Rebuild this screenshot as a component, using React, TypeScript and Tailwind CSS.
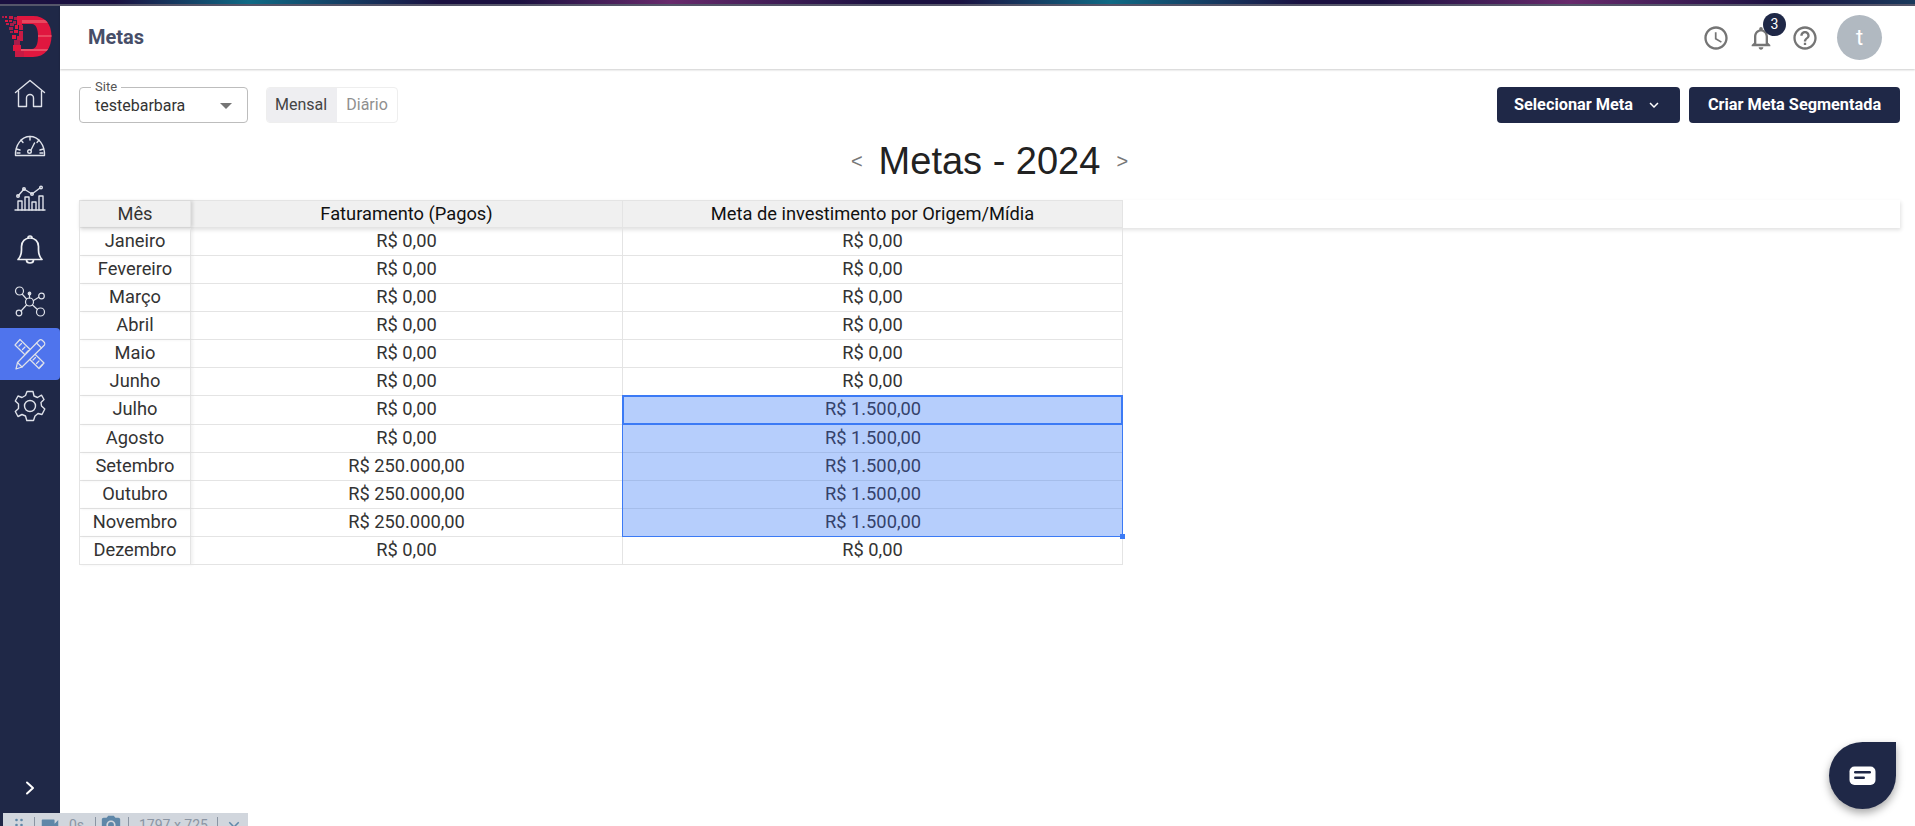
import React from "react";
import { MdAccessTime, MdNotificationsNone, MdHelpOutline, MdKeyboardArrowDown, MdVideocam, MdPhotoCamera, MdClose } from "react-icons/md";

const stroke = { fill: "none", stroke: "#dfe2ea", strokeWidth: 1.4, strokeLinecap: "round", strokeLinejoin: "round" } as const;

function Logo() {
  const px = [[2,1,2,2],[5,1,2,2],[9,1,4,3],[14,2,3,3],[5,5,3,2],[9,5,3,2],[13,6,3,3],[17,5,5,5],[6,8,3,2],[10,8,4,3],[15,10,3,4],[19,10,4,5],[9,12,4,3],[14,15,4,3],[19,16,4,5],[10,16,3,2],[12,20,4,4],[17,21,6,5],[14,25,6,5],[13,30,8,6],[15,36,9,6]];
  return (
    <svg width="52" height="44" viewBox="0 0 52 44" className="block">
      <defs>
        <clipPath id="d">
          <path d="M17 1H33C45 1 51.500 9 51.500 21C51.500 33 45 42 33 42H15V34H27V9H17ZM27 9V34H32C36 34 38 29 38 21C38 14 36 9 32 9Z" />
        </clipPath>
      </defs>
      <g clipPath="url(#d)">
        <rect x="0" y="0" width="52" height="44" fill="#e0173f" />
        <rect x="0" y="5" width="52" height="3" fill="#e8475f" />
        <rect x="0" y="20" width="52" height="2" fill="#e8475f" />
        <rect x="0" y="34" width="52" height="2" fill="#ea5068" />
      </g>
      {px.map(([x, y, w, h], i) => (
        <rect key={i} x={x} y={y} width={w} height={h} fill={i % 3 === 0 ? "#a81c4a" : i % 3 === 1 ? "#e0173f" : "#c91a44"} />
      ))}
    </svg>
  );
}

function HomeIcon() {
  return (
    <svg width="32" height="30" viewBox="0 0 32 30" {...stroke}>
      <path d="M1.500 13.500L16 1.500L30.500 13.500" />
      <path d="M4.500 12V27.500H12.500V19a3.500 3.500 0 0 1 7 0V27.500H27.500V12" />
    </svg>
  );
}
function GaugeIcon() {
  return (
    <svg width="32" height="22" viewBox="0 0 32 22" {...stroke}>
      <path d="M2 20.500H30.500C31 10 24.500 1.500 16 1.500C7.500 1.500 1 10 1.500 20.500Z" />
      <path d="M16 1.500V5M7 5l2 2.500M25 5l-2 2.500M2.500 14l3.500 1M29.500 14l-3.500 1M3 18H6M26 18H29" />
      <circle cx="15.500" cy="16.500" r="1.800" />
      <path d="M17 15L20.500 8" />
    </svg>
  );
}
function ChartIcon() {
  return (
    <svg width="32" height="26" viewBox="0 0 32 26" {...stroke}>
      <path d="M1 25H31" />
      <path d="M4 25V16H8V25M11 25V12H15V25M18 25V17H22V25M25 25V11H29V25" />
      <path d="M4 11L10 4L18 9L26 3" />
      <circle cx="4" cy="11" r="1.300" />
      <circle cx="10" cy="4" r="1.300" />
      <circle cx="18" cy="9" r="1.300" />
      <circle cx="27" cy="2.500" r="1.300" />
    </svg>
  );
}
function BellIcon() {
  return (
    <svg width="26" height="30" viewBox="0 0 26 30" fill="none" stroke="#eef0f4" strokeWidth="1.700" strokeLinejoin="round" strokeLinecap="round">
      <path d="M1 24.500C3.500 22 4.500 20 4.500 15V11.500C4.500 6.500 8 3 13 3C18 3 21.500 6.500 21.500 11.500V15C21.500 20 22.500 22 25 24.500Z" />
      <path d="M11 3A2 2 0 0 1 15 3" />
      <path d="M9.500 25C9.500 29 16.500 29 16.500 25" />
    </svg>
  );
}
function NetworkIcon() {
  return (
    <svg width="32" height="32" viewBox="0 0 32 32" {...stroke} strokeWidth="1.200">
      <circle cx="15.500" cy="16" r="4" />
      <circle cx="5.500" cy="5" r="4" />
      <circle cx="27.500" cy="10" r="2.800" />
      <circle cx="5" cy="27" r="2.800" />
      <circle cx="26.500" cy="26" r="4" />
      <circle cx="15.500" cy="7.500" r="1.300" fill="#dfe2ea" />
      <path d="M8.500 8.500L12.500 13M19.500 14.500L24.800 11.300M12.500 19L7 25M18.500 19L23.500 23.500M15.500 9V12" />
    </svg>
  );
}
function ToolsIcon() {
  return (
    <svg width="32" height="32" viewBox="0 0 32 32" {...stroke} strokeWidth="1.200">
      <path d="M1 7L6 1.500L30 25L25 30.500Z" />
      <path d="M5 8L7.500 5.500M8.500 11.500L11 9M12 15L14.500 12.500M19 22L21.500 19.500M22.500 25.500L25 23M26 29L28.500 26.500" />
      <path d="M25 2.500C26 1.500 27.500 1.500 28.500 2.500L30 4C31 5 31 6.500 30 7.500L8 29L2 31L3.500 24.500Z" fill="#4f74ed" />
      <path d="M22.500 5L27.500 10M3.500 24.500L8 29" />
    </svg>
  );
}
function GearIcon() {
  return (
    <svg width="32" height="32" viewBox="0 0 32 32" {...stroke}>
      <circle cx="16" cy="16" r="5.500" />
      <path d="M13 1.500H19L20 6L23.500 7.500L27.500 5.200L30 9.500L27 12.500L27.500 16L30.800 19L28 24.500L24 23.500L21 26L19.500 30.500H12.800L11.500 26L8 24.500L4 26.500L1.300 21.500L4.500 18.500V14L1.300 11L4 6L8 7.500L11.500 5.500Z" />
    </svg>
  );
}

const nav = [
  { icon: <HomeIcon /> },
  { icon: <GaugeIcon /> },
  { icon: <ChartIcon /> },
  { icon: <BellIcon /> },
  { icon: <NetworkIcon /> },
  { icon: <ToolsIcon />, active: true },
  { icon: <GearIcon /> },
];

const rows: [string, string, string][] = [
  ["Janeiro", "R$ 0,00", "R$ 0,00"],
  ["Fevereiro", "R$ 0,00", "R$ 0,00"],
  ["Março", "R$ 0,00", "R$ 0,00"],
  ["Abril", "R$ 0,00", "R$ 0,00"],
  ["Maio", "R$ 0,00", "R$ 0,00"],
  ["Junho", "R$ 0,00", "R$ 0,00"],
  ["Julho", "R$ 0,00", "R$ 1.500,00"],
  ["Agosto", "R$ 0,00", "R$ 1.500,00"],
  ["Setembro", "R$ 250.000,00", "R$ 1.500,00"],
  ["Outubro", "R$ 250.000,00", "R$ 1.500,00"],
  ["Novembro", "R$ 250.000,00", "R$ 1.500,00"],
  ["Dezembro", "R$ 0,00", "R$ 0,00"],
];

export default function App() {
  return (
    <div className="relative flex h-screen w-full flex-col overflow-hidden bg-white font-['Roboto',sans-serif] text-[#222]">
      <div className="h-[4px] shrink-0 bg-[linear-gradient(90deg,#1a1040_0%,#1a1040_6%,#0f6a85_13%,#1a1040_23%,#1a1040_27%,#682a6c_35%,#1a1040_46%,#1a1040_50%,#0f6a85_58%,#1a1040_68%,#1a1040_72%,#682a6c_82%,#1a1040_93%,#1a3a5c_100%)]" />
      <div className="h-[2px] shrink-0 bg-[#55566a]" />
      <div className="flex min-h-0 flex-1">
        <aside className="flex w-[60px] shrink-0 flex-col bg-[#1f2847]">
          <div className="flex h-[62px] shrink-0 items-start pt-[9px]">
            <Logo />
          </div>
          <nav className="flex flex-col">
            {nav.map((n, i) => (
              <div
                key={i}
                className={`flex h-[52px] items-center justify-center ${n.active ? "rounded-r bg-[#4f74ed]" : ""}`}
              >
                {n.icon}
              </div>
            ))}
          </nav>
          <div className="mt-auto flex h-[54px] items-start justify-center pt-[9px]">
            <svg width="12" height="14" viewBox="0 0 12 14" fill="none" stroke="#fff" strokeWidth="2" strokeLinecap="round" strokeLinejoin="round">
              <path d="M3 1.500L9 7L3 12.500" />
            </svg>
          </div>
        </aside>

        <main className="flex min-w-0 flex-1 flex-col">
          <header className="flex h-[63px] shrink-0 items-center justify-between pl-[28px] pr-[33px] shadow-[0_1px_2px_rgba(0,0,0,0.2)]">
            <h1 className="pb-[2px] text-[20px] font-bold text-[#474e68]">Metas</h1>
            <div className="flex items-center text-[#757575]">
              <MdAccessTime size={28} />
              <div className="relative ml-[17px]">
                <MdNotificationsNone size={28} />
                <span className="absolute left-[16px] top-[-11px] flex h-[23px] w-[23px] items-center justify-center rounded-full bg-[#1f2847] text-[14px] text-white">
                  3
                </span>
              </div>
              <MdHelpOutline size={28} className="ml-[16px]" />
              <div className="ml-[18px] flex h-[45px] w-[45px] items-center justify-center rounded-full bg-[#b1b9c1] text-[22px] text-white">
                t
              </div>
            </div>
          </header>

          <div className="flex flex-1 flex-col pl-[19px] pr-[15px] pt-[18px]">
            <div className="flex items-start justify-between">
              <div className="flex items-start gap-[18px]">
                <div className="relative flex h-[36px] w-[169px] items-center justify-between rounded border border-[#bdbdbd] pl-[15px] pr-[15px] text-[16px] text-[#333]">
                  <span className="absolute left-[11px] top-[-9px] bg-white px-[4px] text-[13px] leading-[15px] text-[#555]">Site</span>
                  <span className="pt-[1px]">testebarbara</span>
                  <span className="mt-[2px] h-0 w-0 border-x-[6px] border-t-[6px] border-x-transparent border-t-[#757575]" />
                </div>
                <div className="flex h-[36px] overflow-hidden rounded border border-[#eeeeee] text-[16px]">
                  <div className="flex w-[70px] items-center justify-center bg-[#eeeef1] pr-[2px] text-[#444]">Mensal</div>
                  <div className="flex w-[60px] items-center justify-center text-[#8f8f8f]">Diário</div>
                </div>
              </div>
              <div className="flex gap-[9px] text-[16.300px] font-bold text-white">
                <button className="flex h-[36px] w-[183px] items-center justify-center gap-[12px] rounded bg-[#1f2847]">
                  Selecionar Meta
                  <MdKeyboardArrowDown size={18} />
                </button>
                <button className="flex h-[36px] w-[211px] items-center justify-center rounded bg-[#1f2847]">
                  Criar Meta Segmentada
                </button>
              </div>
            </div>

            <div className="flex h-[77px] items-center justify-center gap-[16px] pb-[1px]">
              <span className="font-['Liberation_Sans',sans-serif] text-[20px] leading-none text-[#777]">&lt;</span>
              <span className="font-['Liberation_Sans',sans-serif] text-[38px] leading-none text-[#222]">Metas - 2024</span>
              <span className="font-['Liberation_Sans',sans-serif] text-[20px] leading-none text-[#777]">&gt;</span>
            </div>

            <div className="relative text-[18.300px]">
              <div className="flex h-[28px] shadow-[1px_2px_4px_rgba(0,0,0,0.12)]">
                <div className="grid w-[1044px] grid-cols-[112px_432px_500px] border-y border-[#e4e4e4] bg-[#f0f0f0] text-[#111]">
                  <div className="border-l border-r border-[#e4e4e4] text-center leading-[26px] text-[#333] shadow-[2px_0_3px_rgba(0,0,0,0.12)]">Mês</div>
                  <div className="border-r border-[#e4e4e4] text-center leading-[26px]">Faturamento (Pagos)</div>
                  <div className="border-r border-[#e4e4e4] text-center leading-[26px]">Meta de investimento por Origem/Mídia</div>
                </div>
                <div className="flex-1 bg-white" />
              </div>
              <div className="w-[1044px]">
                {rows.map(([m, a, b], i) => {
                  const sel = i >= 6 && i <= 10;
                  return (
                    <div key={m} className={`grid grid-cols-[112px_432px_500px] leading-[26px] ${i === 6 ? "h-[29px]" : "h-[28px]"}`}>
                      <div className="border-b border-l border-r border-[#e4e4e4] text-center text-[#333] shadow-[2px_0_3px_rgba(0,0,0,0.06)]">{m}</div>
                      <div className="border-b border-r border-[#e4e4e4] text-center text-[#333]">{a}</div>
                      <div className={sel ? "border-b border-[#a5bdea] bg-[#b6cefc] text-center text-[#34426b]" : "border-b border-r border-[#e4e4e4] text-center text-[#333]"}>{b}</div>
                    </div>
                  );
                })}
              </div>
              {/* selection overlay */}
              <div className="pointer-events-none absolute left-[543px] top-[195px] h-[142px] w-[501px] border border-[#3b7af5]">
                <div className="absolute inset-x-[-1px] top-[-1px] h-[30px] border-2 border-[#3b7af5]" />
                <div className="absolute bottom-[-3px] right-[-3px] h-[5px] w-[5px] bg-[#3b7af5]" />
              </div>
            </div>
          </div>
        </main>
      </div>

      {/* chat launcher */}
      <div className="absolute left-[1829px] top-[742px] flex h-[67px] w-[67px] items-center justify-center rounded-full rounded-tr-[8px] bg-[#1f2847] shadow-[0_4px_8px_rgba(0,0,0,0.35)]">
        <svg width="27" height="20" viewBox="0 0 27 20">
          <rect x="0.500" y="0.500" width="26" height="18.500" rx="5" fill="#fff" />
          <rect x="5" y="5" width="17" height="2.500" rx="1.200" fill="#1f2847" />
          <rect x="5" y="10.500" width="11" height="2.500" rx="1.200" fill="#1f2847" />
        </svg>
      </div>

      {/* capture toolbar */}
      <div className="absolute left-[3px] top-[813px] flex h-[30px] w-[245px] items-start bg-[#d1d6dd] pt-[1px] text-[14px] leading-[22px] text-[#8b95a3]">
        <span className="flex w-[31px] justify-center pt-[4px]">
          <svg width="8" height="14" viewBox="0 0 8 14" fill="#5f87a8">
            <circle cx="1.500" cy="2" r="1.300" /><circle cx="6.500" cy="2" r="1.300" /><circle cx="1.500" cy="7" r="1.300" /><circle cx="6.500" cy="7" r="1.300" />
          </svg>
        </span>
        <span className="mt-[3px] h-[20px] w-px bg-[#8b95a3]" />
        <span className="flex w-[60px] items-center gap-[8px] pl-[4px]">
          <MdVideocam size={22} className="text-[#5f87a8]" />0s
        </span>
        <span className="mt-[3px] h-[20px] w-px bg-[#8b95a3]" />
        <span className="w-[32px] pl-[4px]"><MdPhotoCamera size={22} className="text-[#5f87a8]" /></span>
        <span className="mt-[3px] h-[20px] w-px bg-[#8b95a3]" />
        <span className="w-[88px] pl-[10px]">1797 x 725</span>
        <span className="mt-[3px] h-[20px] w-px bg-[#8b95a3]" />
        <span className="pl-[7px] pt-[4px]"><MdClose size={18} className="text-[#5f87a8]" /></span>
      </div>
    </div>
  );
}
